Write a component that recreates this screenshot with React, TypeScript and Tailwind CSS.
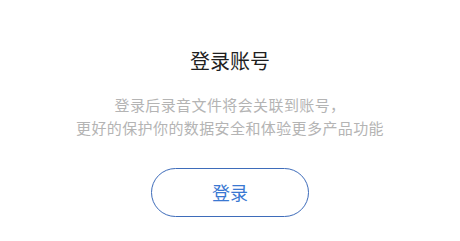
export default function App() {
  return (
    <div
      className="w-[460px] h-[241px] bg-white flex flex-col items-center pt-[47px]"
      style={{ fontFamily: '"Noto Sans CJK SC", "Noto Sans", sans-serif' }}
    >
      <h1 className="text-[20px] leading-[28px] text-[#1f1f1f]">登录账号</h1>
      <p className="mt-[18px] text-center text-[15px] leading-[23px] tracking-[0.4px] text-[#b4b4b4]">
        登录后录音文件将会关联到账号，
        <br />
        更好的保护你的数据安全和体验更多产品功能
      </p>
      <button className="mt-[29px] w-[158px] h-[49px] rounded-full border border-[#3e6cba] text-[18px] text-[#3a78d2] flex items-center justify-center">
        登录
      </button>
    </div>
  );
}
